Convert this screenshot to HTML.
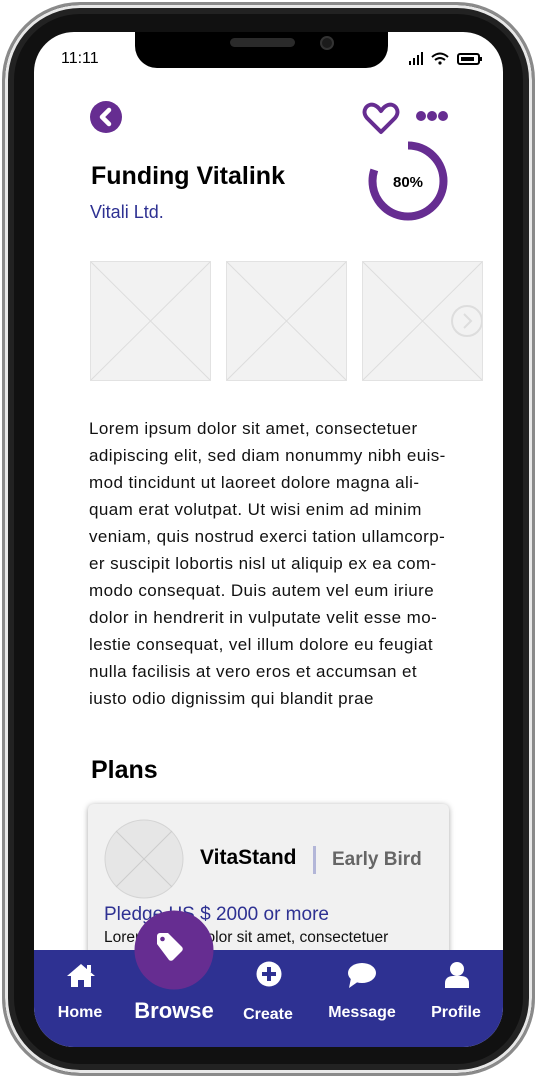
<!DOCTYPE html>
<html><head><meta charset="utf-8"><style>
*{margin:0;padding:0;box-sizing:border-box}
body{width:537px;height:1078px;background:#fff;position:relative;overflow:hidden;font-family:"Liberation Sans",sans-serif}
.phone{position:absolute;left:2px;top:2px;width:533px;height:1074px;border-radius:78px;background:#111;border:3px solid #8a8a8a;box-shadow:inset 0 0 0 3px #e8e8e8,inset 0 0 0 9px #222}
.screen{position:absolute;left:34px;top:32px;width:469px;height:1015px;border-radius:40px;background:#fff;overflow:hidden}
.notch{position:absolute;left:101px;top:0;width:253px;height:36px;background:#000;border-radius:0 0 22px 22px}
.abs{position:absolute}
.ph{position:absolute;top:229px;width:121px;height:120px;background:#f2f2f2;border:1px solid #e2e2e2}
.txt{position:absolute;left:55px;top:383px;font-size:17px;line-height:27px;color:#111;letter-spacing:.42px;white-space:nowrap}
.nav{position:absolute;left:0;top:918px;width:469px;height:97px;background:#2e3192}
.lbl{position:absolute;color:#fff;font-weight:bold;font-size:16px;text-align:center;width:100px}
</style></head><body>
<div class="phone"></div>
<div class="screen">
 <div class="notch"><div class="abs" style="left:95px;top:6px;width:65px;height:9px;border-radius:5px;background:#2a2a2a"></div><div class="abs" style="left:185px;top:4px;width:14px;height:14px;border-radius:7px;background:#1b1b1b;border:2px solid #333"></div></div>
 <div class="abs" style="left:27px;top:18px;font-size:16px;color:#000">11:11</div>
 <svg class="abs" style="left:375px;top:20px" width="96" height="16" viewBox="0 0 96 16">
  <rect x="0" y="9" width="2" height="4" fill="#000"/><rect x="4" y="6" width="2" height="7" fill="#000"/><rect x="8" y="3" width="2" height="10" fill="#000"/><rect x="12" y="0" width="2" height="13" fill="#000"/>
  <path d="M23 5 Q31 -2 39 5 M26 8 Q31 4 36 8" stroke="#000" stroke-width="2" fill="none"/><circle cx="31" cy="11" r="1.6" fill="#000"/>
  <rect x="49" y="2" width="21" height="10" rx="2" stroke="#000" stroke-width="2" fill="none"/><rect x="52" y="5" width="13" height="4" fill="#000"/><rect x="71" y="5" width="2" height="4" fill="#000"/>
 </svg>
 <svg class="abs" style="left:56px;top:69px" width="34" height="34"><circle cx="16" cy="16" r="16" fill="#662d91"/><path d="M19 9 L12 16 L19 23" stroke="#fff" stroke-width="4.5" fill="none" stroke-linecap="round" stroke-linejoin="round"/></svg>
 <svg class="abs" style="left:328px;top:69px" width="40" height="36"><path d="M19 31 L5 17 C-1 10 5 2 12 4 C15 5 17 7 19 10 C21 7 23 5 26 4 C33 2 39 10 33 17 Z" stroke="#662d91" stroke-width="4" fill="none" stroke-linejoin="round"/></svg>
 <svg class="abs" style="left:381px;top:78px" width="36" height="12"><circle cx="6" cy="6" r="5" fill="#662d91"/><circle cx="17" cy="6" r="5" fill="#662d91"/><circle cx="28" cy="6" r="5" fill="#662d91"/></svg>
 <div class="abs" style="left:57px;top:130px;font-size:25px;font-weight:bold;color:#000">Funding Vitalink</div>
 <div class="abs" style="left:56px;top:170px;font-size:18px;color:#2e3192">Vitali Ltd.</div>
 <svg class="abs" style="left:333px;top:108px" width="82" height="82"><circle cx="41" cy="41" r="35.5" stroke="#662d91" stroke-width="8" fill="none" stroke-dasharray="178.4 223" transform="rotate(-90 41 41)"/><text x="41" y="47" text-anchor="middle" font-family="Liberation Sans" font-weight="bold" font-size="15" fill="#000">80%</text></svg>
 <div class="ph" style="left:56px"><svg width="119" height="118"><path d="M0 0L119 118M119 0L0 118" stroke="#ddd"/></svg></div>
 <div class="ph" style="left:192px"><svg width="119" height="118"><path d="M0 0L119 118M119 0L0 118" stroke="#ddd"/></svg></div>
 <div class="ph" style="left:328px"><svg width="119" height="118"><path d="M0 0L119 118M119 0L0 118" stroke="#ddd"/><circle cx="104" cy="59" r="15" fill="none" stroke="#ddd" stroke-width="2"/><path d="M101 52l7 7-7 7" stroke="#ddd" stroke-width="2" fill="none"/></svg></div>
 <div class="txt">Lorem ipsum dolor sit amet, consectetuer<br>adipiscing elit, sed diam nonummy nibh euis-<br>mod tincidunt ut laoreet dolore magna ali-<br>quam erat volutpat. Ut wisi enim ad minim<br>veniam, quis nostrud exerci tation ullamcorp-<br>er suscipit lobortis nisl ut aliquip ex ea com-<br>modo consequat. Duis autem vel eum iriure<br>dolor in hendrerit in vulputate velit esse mo-<br>lestie consequat, vel illum dolore eu feugiat<br>nulla facilisis at vero eros et accumsan et<br>iusto odio dignissim qui blandit prae</div>
 <div class="abs" style="left:57px;top:724px;font-size:25px;font-weight:bold;color:#000">Plans</div>
 <div class="abs" style="left:54px;top:772px;width:361px;height:170px;background:#f1f1f1;border-radius:6px;box-shadow:0 1px 6px rgba(0,0,0,.35)"></div>
 <svg class="abs" style="left:70px;top:787px" width="80" height="80"><circle cx="40" cy="40" r="39" fill="#e6e6e6" stroke="#d4d4d4"/><path d="M12 12L68 68M68 12L12 68" stroke="#ccc"/></svg>
 <div class="abs" style="left:166px;top:814px;font-size:21px;font-weight:bold;color:#000">VitaStand</div>
 <div class="abs" style="left:279px;top:814px;width:3px;height:28px;background:#b3b6d8"></div>
 <div class="abs" style="left:298px;top:817px;font-size:19px;font-weight:bold;color:#666">Early Bird</div>
 <div class="abs" style="left:70px;top:872px;font-size:19px;color:#2e3192">Pledge US $ 2000 or more</div>
 <div class="abs" style="left:70px;top:897px;font-size:15.5px;color:#111">Lorem ipsum dolor sit amet, consectetuer</div>
 <div class="nav">
  <svg class="abs" style="left:32px;top:12px" width="30" height="26"><path d="M15 2L1 14h4v11h7v-7h6v7h7V14h4z" fill="#fff"/><rect x="21" y="3" width="4" height="7" fill="#fff"/></svg>
  <svg class="abs" style="left:222px;top:11px" width="26" height="26"><circle cx="13" cy="13" r="12.5" fill="#fff"/><path d="M13 6v14M6 13h14" stroke="#2e3192" stroke-width="4"/></svg>
  <svg class="abs" style="left:313px;top:12px" width="30" height="28"><ellipse cx="15" cy="11" rx="14" ry="10" fill="#fff"/><path d="M4 16L2 26L12 19z" fill="#fff"/></svg>
  <svg class="abs" style="left:410px;top:11px" width="26" height="28"><circle cx="13" cy="8" r="7" fill="#fff"/><path d="M1 27v-5c0-5 4-7 8-7h8c4 0 8 2 8 7v5z" fill="#fff"/></svg>
  <div class="lbl" style="left:-4px;top:54px">Home</div>
  <div class="lbl" style="left:90px;top:48px;font-size:22px">Browse</div>
  <div class="lbl" style="left:184px;top:56px">Create</div>
  <div class="lbl" style="left:278px;top:54px">Message</div>
  <div class="lbl" style="left:372px;top:54px">Profile</div>
 </div>
 <svg class="abs" style="left:100px;top:878px" width="80" height="80"><circle cx="40" cy="40" r="39.5" fill="#662d91"/><path d="M25 27 V19 a3 3 0 0 1 3-3 H36 L50 30 a3 3 0 0 1 0 4 L41 43 a3 3 0 0 1-4 0 Z" fill="#fff" transform="translate(-2,7)"/><circle cx="28.5" cy="29" r="2.3" fill="#662d91"/></svg>
</div>
</body></html>
